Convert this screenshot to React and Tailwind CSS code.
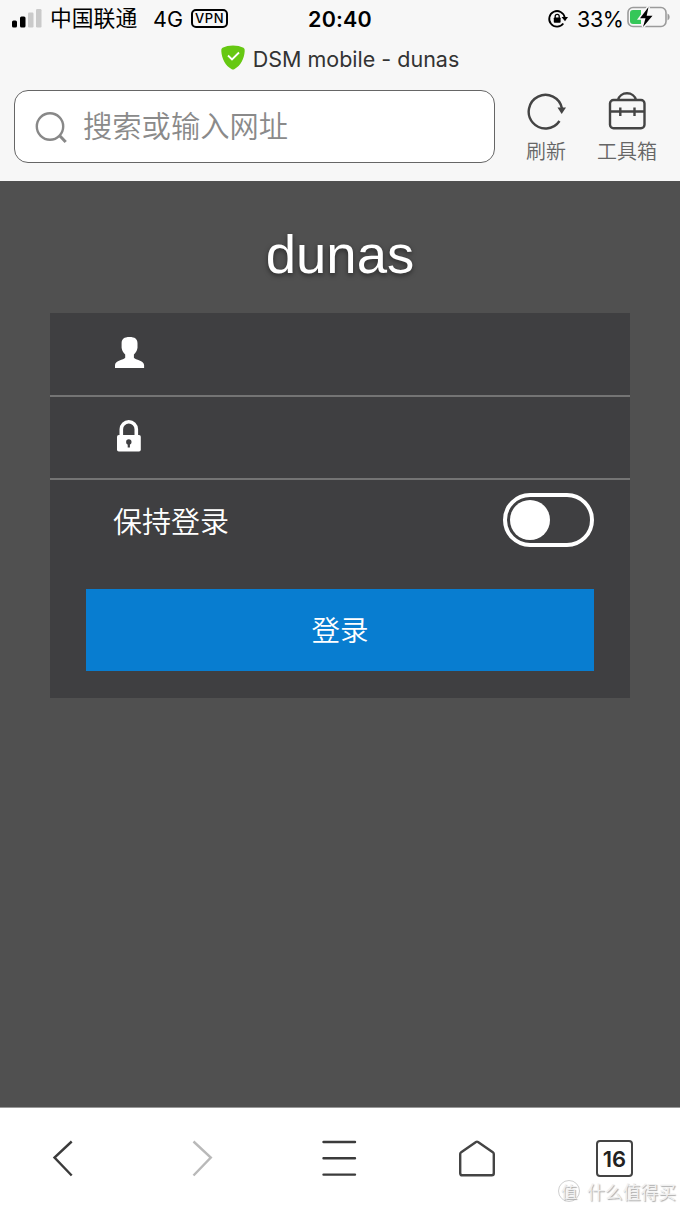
import React from 'react';

const SANS = "font-['Inter','Noto_Sans_CJK_SC',sans-serif]";
const CJK = "font-['Noto_Sans_CJK_SC',sans-serif]";

function StatusBar() {
  return (
    <div className="flex h-[37px] items-center text-black">
      <div className="flex w-[240px] items-center pl-3">
        <svg className="mr-2 h-5 w-[30px] shrink-0" viewBox="0 0 30 20">
          <rect x="0" y="11.5" width="5" height="7" rx="1.5" fill="#000" />
          <rect x="8" y="7.5" width="5.5" height="11" rx="1.5" fill="#000" />
          <rect x="16" y="3.5" width="5.5" height="15" rx="1.2" fill="#cacaca" />
          <rect x="24" y="0" width="5.5" height="18.5" rx="1.2" fill="#cacaca" />
        </svg>
        <span className={`${CJK} -mt-[3px] w-[88px] shrink-0 whitespace-nowrap text-[21.8px] leading-8`}>中国联通</span>
        <span className="ml-[14px] w-[39px] shrink-0 whitespace-nowrap pl-px text-[21.5px] leading-8">4G</span>
        <span className="-mt-px flex h-[19px] w-[37px] shrink-0 items-center justify-center rounded-[5px] border-2 border-black text-[13px] font-medium leading-none tracking-[0.6px]">
          VPN
        </span>
      </div>
      <div className="flex-1 text-center text-[21.5px] font-semibold leading-8 tracking-[0.2px]">20:40</div>
      <div className="flex w-[240px] items-center">
        <svg className="ml-[107px] h-5 w-[22px] shrink-0" viewBox="0 0 22 20" fill="none" stroke="#000" strokeWidth="1.8">
          <path d="M16.3 14.5A7.8 7.8 0 1 1 17.7 8.500" />
          <path d="M14.500 8h6.500l-3 4.200z" fill="#000" stroke="none" />
          <rect x="6.8" y="8.5" width="6.8" height="5.2" rx=".8" fill="#000" stroke="none" />
          <path d="M8.2 9V7.3a2 2 0 0 1 4 0V9" strokeWidth="1.3" />
        </svg>
        <span className="ml-[8px] w-[50px] shrink-0 whitespace-nowrap text-[21.5px] leading-8 tracking-[-0.4px]">33%</span>
        <svg className="-mt-[3px] h-[22px] w-[44px] shrink-0" viewBox="0 0 44 22">
          <rect x="1" y="1.5" width="38" height="19" rx="5" fill="none" stroke="#9b9b9b" strokeWidth="1.6" />
          <path d="M40.5 7.5q2.200.8 2.200 3.500t-2.200 3.500z" fill="#9b9b9b" />
          <path d="M6 4h8v14H6q-3 0-3-3V7q0-3 3-3z" fill="#35c759" />
          <path d="M21.5 1 13 12.200H18.500L16 21 25.500 9.700H19.700z" fill="#000" stroke="#f7f7f7" strokeWidth="3" />
          <path d="M21.5 1 13 12.200H18.500L16 21 25.500 9.700H19.700z" fill="#000" />
        </svg>
      </div>
    </div>
  );
}

function Header() {
  return (
    <header className="h-[181px] bg-[#f7f7f7]">
      <StatusBar />
      <div className="flex h-[43px] items-center justify-center gap-[8px]">
        <svg className="-mt-[2px] h-[25px] w-[24px]" viewBox="0 0 24 25">
          <path d="M12 .5Q18 .5 22.5 2.700 24 3.400 23.700 6C23.200 14 19.500 20.600 13.600 24Q12 25 10.400 24C4.500 20.600.8 14 .3 6Q0 3.400 1.500 2.700 6 .5 12 .5z" fill="#66c812" />
          <path d="m7 10.500 4 4L18 7.500" fill="none" stroke="#fff" strokeWidth="1.8" />
        </svg>
        <span className="whitespace-nowrap text-[21.5px] leading-8 text-[#333]">DSM mobile - dunas</span>
      </div>
      <div className="flex pl-[14px] pt-[10px]">
        <div className="flex h-[73px] w-[481px] items-center rounded-[14px] border border-[#666] bg-white">
          <svg className="ml-[20px] h-[34px] w-[34px]" viewBox="0 0 34 34" fill="none" stroke="#888" strokeWidth="2.4">
            <circle cx="15" cy="16.5" r="13.2" />
            <path d="m24.500 25.500 6.200 6.500" strokeWidth="3" />
          </svg>
          <span className={`${CJK} -mt-[6px] ml-[14px] whitespace-nowrap text-[29.3px] font-[350] leading-10 text-[#8a8a8a]`}>搜索或输入网址</span>
        </div>
        <div className="ml-[16px] flex w-[70px] flex-col items-center">
          <svg className="h-[40px] w-[40px]" viewBox="0 0 40 40" fill="none" stroke="#444" strokeWidth="2.4">
            <path d="M33.500 31A16.800 16.800 0 1 1 36 18.500" />
            <path d="M31.500 17.500h8.500l-4.300 6.500z" fill="#444" stroke="none" />
          </svg>
          <span className={`${CJK} mt-[5px] text-[20px] font-[350] leading-8 text-[#666]`}>刷新</span>
        </div>
        <div className="ml-[11px] flex w-[70px] flex-col items-center">
          <svg className="h-[40px] w-[40px]" viewBox="0 0 40 40" fill="none" stroke="#444" strokeWidth="2.4">
            <path d="M11 10a9.200 8.500 0 0 1 18 0" />
            <rect x="3" y="10" width="34.5" height="28.3" rx="3.5" />
            <path d="M3 21.500h34.500M13.300 17.500v8.500M27.500 17.500v8.500" />
          </svg>
          <span className={`${CJK} mt-[5px] whitespace-nowrap text-[20px] font-[350] leading-8 text-[#666]`}>工具箱</span>
        </div>
      </div>
    </header>
  );
}

function LoginCard() {
  return (
    <form className="mx-[50px] h-[385px] bg-[#3f3f41]" onSubmit={(e) => e.preventDefault()}>
      <div className="flex h-[84px] border-b-2 border-[#747474] pl-[64px] pt-[23px]">
        <svg className="h-[33px] w-[31px]" viewBox="0 0 31 33" fill="#fff">
          <path d="M15.500 1c5.400 0 8 2 8 6.300v4.500c-.4 3.200-2 5.300-3.600 6.700v3.200c1.500 2.500 10 2.300 10.200 7.300v3H1v-3c.2-5 8.700-4.800 10.200-7.300v-3.200C9.600 17.100 8 15 7.600 11.800V7.300c0-4.300 2.500-6.300 7.900-6.300z" />
        </svg>
      </div>
      <div className="flex h-[83px] border-b-2 border-[#747474] pl-[66px] pt-[22px]">
        <svg className="h-[34px] w-[26px]" viewBox="0 0 26 34">
          <path d="M5.300 18V10.300a7.500 7.500 0 0 1 15 0V18" fill="none" stroke="#fff" strokeWidth="3.6" />
          <rect x="1" y="16" width="23.8" height="16.5" rx="1.8" fill="#fff" />
          <circle cx="12.8" cy="23" r="2.7" fill="#3f3f41" />
          <path d="M11.700 23h2.200v5.500h-2.200z" fill="#3f3f41" />
        </svg>
      </div>
      <div className="flex h-[109px] items-start justify-between pl-[63px] pr-[36px] pt-[13px]">
        <span className={`${CJK} pt-[7px] text-[29px] font-[350] leading-10 text-white`}>保持登录</span>
        <button type="button" role="switch" aria-checked="false" className="flex h-[54px] w-[91px] items-center rounded-full border-4 border-white pl-[3px]">
          <span className="size-10 rounded-full bg-white" />
        </button>
      </div>
      <button className={`${CJK} mx-[36px] flex h-[82px] w-[508px] items-center justify-center bg-[#087dd0] pb-[2px] text-[28.5px] font-[350] text-white`}>
        登录
      </button>
    </form>
  );
}

function BottomNav() {
  return (
    <nav className="flex h-[102px] items-start border-t border-[#999] bg-white pl-[44px] pt-[29px]">
      <svg className="size-10" viewBox="0 0 40 40" fill="none" stroke="#3b3b3b" strokeWidth="2.4">
        <path d="M27.700 4.500 10.500 20.500l17.200 18" />
      </svg>
      <svg className="ml-[97px] size-10" viewBox="0 0 40 40" fill="none" stroke="#b9b9b9" strokeWidth="2.4">
        <path d="M12.500 4.500 29.800 20.500 12.500 38.500" />
      </svg>
      <svg className="ml-[98px] size-10" viewBox="0 0 40 40" fill="none" stroke="#3b3b3b" strokeWidth="2.4">
        <path d="M4.500 5h31.500M4.500 21.300h31.500M4.500 37.600h31.500" strokeLinecap="round" />
      </svg>
      <svg className="ml-[98px] size-10" viewBox="0 0 40 40" fill="none" stroke="#444" strokeWidth="2.4" strokeLinejoin="round">
        <path d="M3.200 17q0-1 1-1.700L19 5q1-.7 2 0l14.800 10.300q1 .7 1 1.700v19.300q0 2-2 2H5.200q-2 0-2-2z" />
      </svg>
      <div className="ml-[99px] mt-[3px] flex size-[37px] items-center justify-center rounded-[4px] border-2 border-[#444] text-[22px] font-semibold leading-none text-[#222]">
        16
      </div>
    </nav>
  );
}

export default function App() {
  return (
    <div className={`${SANS} relative flex h-[1209px] w-[680px] flex-col overflow-hidden bg-[#505050]`}>
      <Header />
      <main className="flex-1">
        <h1 className="h-[132px] pt-[42px] text-center font-['Liberation_Sans',sans-serif] text-[54.5px] leading-[64px] text-white [text-shadow:0_2px_5px_rgba(0,0,0,0.5)]">
          dunas
        </h1>
        <LoginCard />
      </main>
      <BottomNav />
      <div className={`${CJK} absolute bottom-[6px] right-[4px] flex items-center gap-[7px] whitespace-nowrap text-[#f0f0f0] [text-shadow:1px_1px_1px_#aaa]`}>
        <span className="flex size-[22px] items-center justify-center rounded-full border border-[#d0d0d0] text-[16px] leading-none">值</span>
        <span className="text-[17.8px] leading-6">什么值得买</span>
      </div>
    </div>
  );
}
